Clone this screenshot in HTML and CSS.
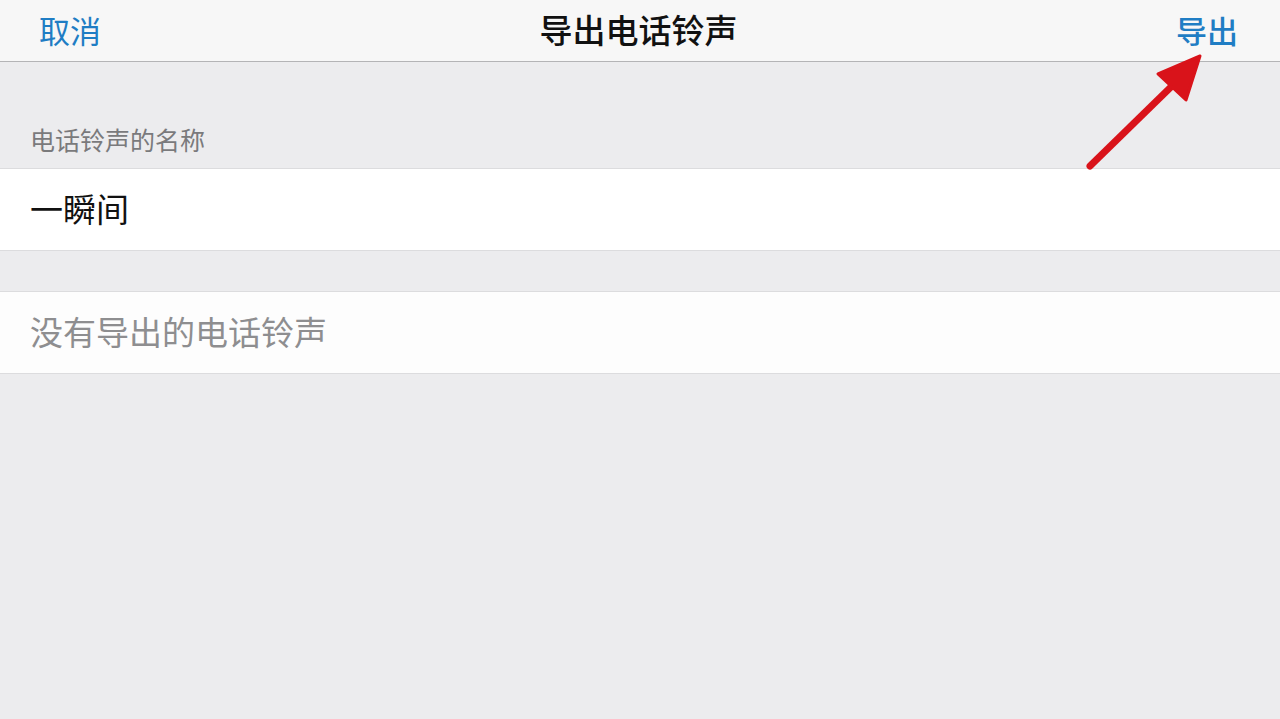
FILE: index.html
```html
<!DOCTYPE html>
<html lang="zh-CN">
<head>
    <meta charset="UTF-8">
    <meta name="viewport" content="width=device-width, initial-scale=1.0">
    <title>导出电话铃声</title>
    <link rel="stylesheet" href="styles.css">
</head>
<body>
    <header class="navbar">
        <span class="nav-btn">取消</span>
        <h1 class="nav-title">导出电话铃声</h1>
        <span class="nav-btn nav-done">导出</span>
    </header>

    <div class="section-header">电话铃声的名称</div>
    <div class="row">一瞬间</div>

    <div class="spacer"></div>
    <div class="row placeholder">没有导出的电话铃声</div>

    <!-- red annotation arrow -->
    <svg class="arrow" width="140" height="130" viewBox="0 0 140 130">
        <line x1="18" y1="116" x2="102" y2="34" stroke="#d9131a" stroke-width="7" stroke-linecap="round"/>
        <polygon points="128,6 86,24 114,50" fill="#d9131a" stroke="#d9131a" stroke-width="3" stroke-linejoin="round"/>
    </svg>
</body>
</html>
```

FILE: styles.css
```css
body {
    margin: 0;
    height: 100vh;
    background-color: #ececee;
    font-family: "Noto Sans CJK SC", "Noto Sans", sans-serif;
    position: relative;
    overflow: hidden;
}

.navbar {
    height: 61px;
    background-color: #f7f7f7;
    border-bottom: 1px solid #b4b4b6;
    display: flex;
    align-items: center;
    justify-content: space-between;
    padding: 0 42px 0 39px;
}

.nav-btn {
    color: #1f7dc4;
    font-size: 31px;
    line-height: 1;
    margin-top: -2px;
}

.nav-done {
    font-weight: 500;
}

.nav-title {
    font-size: 33px;
    font-weight: 500;
    color: #111;
    margin: 0;
    margin-top: -2px;
    line-height: 1;
}

.section-header {
    height: 107px;
    box-sizing: border-box;
    padding: 0 30px 11px;
    display: flex;
    align-items: flex-end;
    font-size: 25px;
    color: #7a7a7c;
    border-bottom: 1px solid #dcdcde;
}

.row {
    height: 82px;
    box-sizing: border-box;
    background-color: #fff;
    border-bottom: 1px solid #dcdcde;
    display: flex;
    align-items: center;
    padding: 0 30px 4px;
    font-size: 33px;
    color: #111;
}

.spacer {
    height: 40px;
    border-bottom: 1px solid #dcdcde;
}

.placeholder {
    color: #8e8e90;
    background-color: #fdfdfd;
}

.arrow {
    position: absolute;
    left: 1072px;
    top: 50px;
}
```
